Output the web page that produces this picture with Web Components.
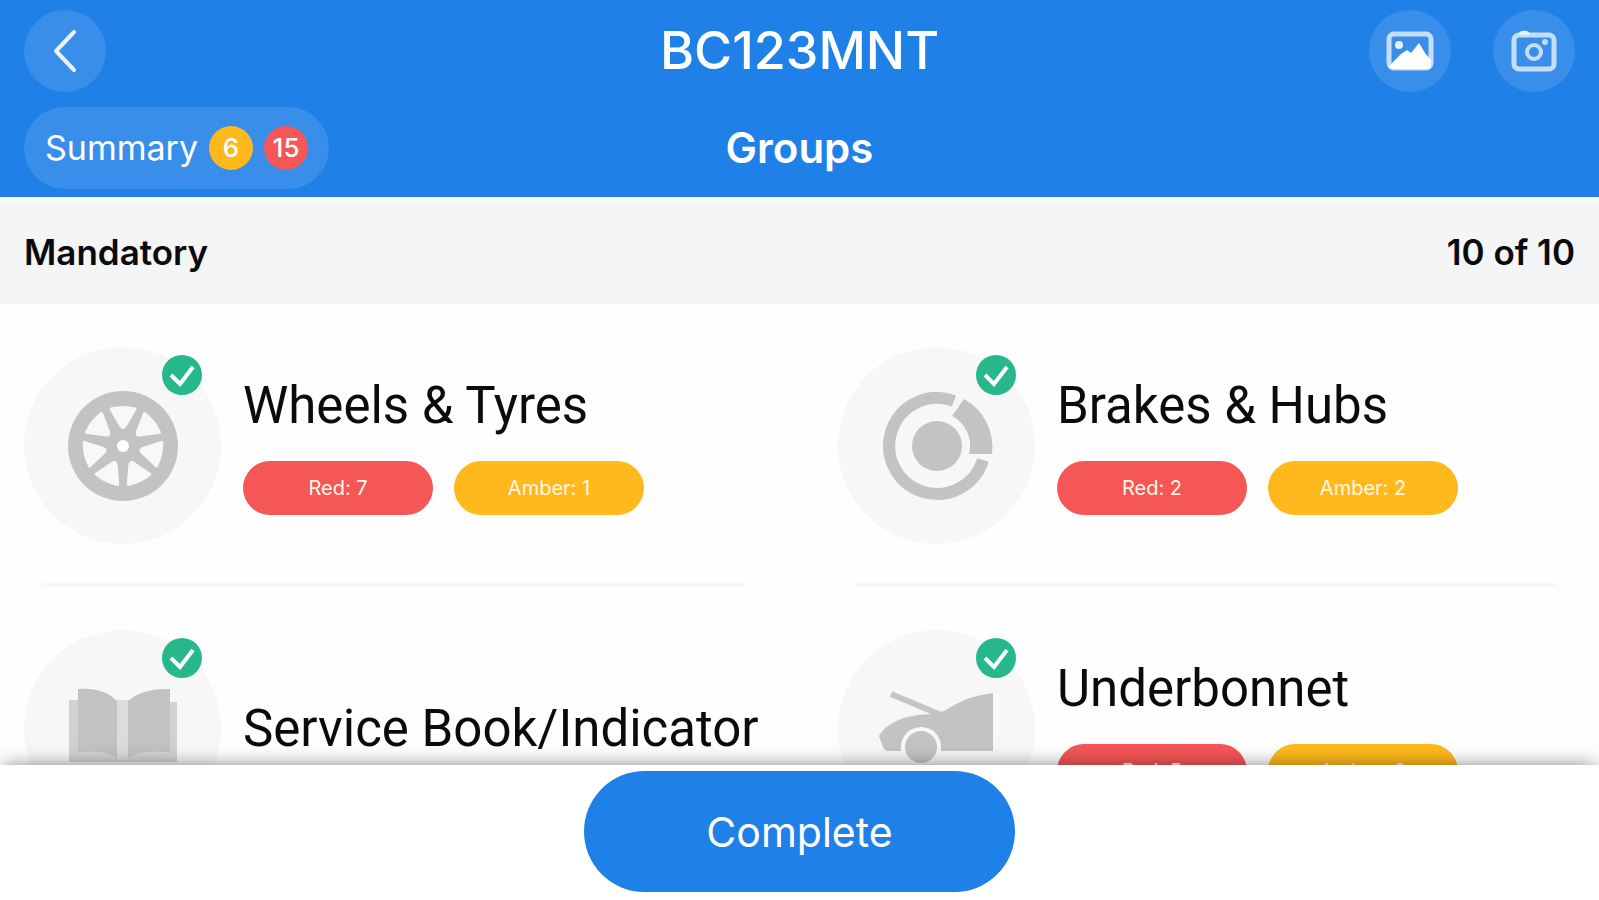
<!DOCTYPE html>
<html lang="en">
<head>
<meta charset="utf-8">
<meta name="viewport" content="width=device-width, initial-scale=1">
<title>BC123MNT - Groups</title>
<style>
  body { margin: 0; font-family: Inter, "Liberation Sans", sans-serif; color: #0b0b0b; background: #fefefe;
    --blue: #1f80e8; --red: #f55656; --amber: #ffb91d; --green: #26b88b; --gutter: 24px; }
</style>
</head>
<body>
<inspection-screen>
  <app-header slot="header" heading="BC123MNT" subheading="Groups" amber="6" red="15"></app-header>
  <section-bar slot="header" label="Mandatory">10 of 10</section-bar>
  <group-grid>
    <group-card icon="wheel" label="Wheels &amp; Tyres"><count-pill>Red: 7</count-pill><count-pill tone="amber">Amber: 1</count-pill></group-card>
    <group-card icon="brake" label="Brakes &amp; Hubs"><count-pill>Red: 2</count-pill><count-pill tone="amber">Amber: 2</count-pill></group-card>
    <group-card icon="book" label="Service Book/Indicator"></group-card>
    <group-card icon="car" label="Underbonnet"><count-pill>Red: 5</count-pill><count-pill tone="amber">Amber: 3</count-pill></group-card>
  </group-grid>
  <action-bar slot="footer">Complete</action-bar>
</inspection-screen>

<script>
const base = '*{box-sizing:border-box}h1,h2,p{margin:0}';
function define(name, render) {
  customElements.define(name, class extends HTMLElement {
    connectedCallback() {
      if (this.shadowRoot) return;
      const t = document.createElement('template');
      t.innerHTML = render(this);
      this.attachShadow({ mode: 'open' }).append(t.content.cloneNode(true));
    }
  });
}

const opening = '<path d="M-12-37Q0-40 12-37L2-20Q0-17-2-20Z"/>';
const icons = {
  wheel: `<circle r="55" fill="#c3c3c3"/><g fill="#f8f8f8" stroke="#f8f8f8" stroke-width="3" stroke-linejoin="round">${
    [0, 1, 2, 3, 4, 5, 6].map(i => `<g transform="rotate(${i * 360 / 7})">${opening}</g>`).join('')}</g><circle r="6" fill="#fff"/>`,
  brake: `<circle r="25" fill="#c3c3c3"/><path d="M46 14A48 48 0 1 1 17-45" fill="none" stroke="#c3c3c3" stroke-width="12"/>
    <path d="M27-47A55 55 0 0 1 55 8H32A33 33 0 0 0 15-30Z" fill="#c3c3c3"/>`,
  book: `<path d="M-54-29H-45V24Q-20 20-5 29H5Q20 20 45 24V-27H54V33H-54Z" fill="#d2d2d2"/>
    <path d="M-6-29H6V31H-6Z" fill="#dcdcdc"/>
    <path d="M-45-40Q-20-42-6-28V29Q-20 20-45 24ZM47-40Q20-41 5-28V29Q20 20 47 24Z" fill="#c2c2c2"/>`,
  car: `<path d="M-46-35L4-14" stroke="#c5c5c5" stroke-width="6"/>
    <path d="M56-36V22H4A20 20 0 0 0-36 22H-49Q-52 22-54 18L-58 7Q-52-5-30-12Q-18-15-5-15L7-18Q32-34 56-36Z" fill="#c3c3c3"/>
    <circle cx="-16" cy="18" r="20" fill="#f7f7f7"/><circle cx="-16" cy="18" r="16" fill="#c3c3c3"/>`
};

define('inspection-screen', () => `<style>${base}
  :host{display:flex;flex-direction:column;height:100vh;overflow:hidden}
  main{flex:1;min-height:0;overflow:hidden}
</style><slot name="header"></slot><main><slot></slot></main><slot name="footer"></slot>`);

define('round-button', el => `<style>${base}
  :host{display:block}
  button{display:grid;place-items:center;width:82px;height:82px;padding:0;border:0;border-radius:50%;background:#398ee9;color:#fff}
</style><button aria-label="${el.getAttribute('label')}"><slot></slot></button>`);

define('count-badge', el => `<style>${base}
  :host{display:grid;place-items:center;width:44px;height:44px;border-radius:50%;
    background:var(--${el.getAttribute('tone')});color:#fff;font-size:26px;line-height:44px;font-weight:500}
</style><slot></slot>`);

define('app-header', el => `<style>${base}
  :host{display:block;background:var(--blue);color:#fff}
  header{display:grid;grid-template-columns:1fr auto 1fr;grid-auto-rows:82px;row-gap:15px;align-items:center;padding:10px var(--gutter) 8px}
  h1{font-size:52px;line-height:60px;font-weight:500;text-align:center}
  h2{font-size:42px;line-height:52px;font-weight:600;text-align:center}
  .actions{display:flex;gap:42px;justify-content:flex-end}
  .summary{justify-self:start;display:flex;align-items:center;gap:11px;height:82px;padding:0 21px;border:0;border-radius:41px;
    background:#398ee9;color:#fff;font:400 34px/44px Inter,"Liberation Sans",sans-serif}
  svg{display:block}
</style>
<header>
  <round-button label="Back"><svg width="30" height="50" viewBox="0 0 30 50" fill="none" stroke="#e9f3ff" stroke-width="4" stroke-linecap="round" stroke-linejoin="round"><path d="M24 6L6 25L24 44"/></svg></round-button>
  <h1>${el.getAttribute('heading')}</h1>
  <div class="actions">
    <round-button label="Gallery"><svg width="48" height="40" viewBox="0 0 48 40"><rect x="3" y="3" width="42" height="34" rx="5" fill="none" stroke="#c4defa" stroke-width="5"/><path d="M3 35L15 23L21 19L25 22L33 12L39 22L45 29V34Q45 38 41 38H7Q3 38 3 35Z" fill="#fff"/><circle cx="13" cy="14" r="4" fill="#e6f2ff"/></svg></round-button>
    <round-button label="Camera"><svg width="46" height="42" viewBox="0 0 46 42" fill="none" stroke="#c4defa"><rect x="3" y="5" width="40" height="34" rx="5" stroke-width="5"/><path d="M8 4Q9 1 13 1Q17 1 19 4Z" fill="#e6f2ff" stroke="#e6f2ff"/><circle cx="23" cy="22" r="7" stroke-width="4"/><circle cx="34" cy="12" r="3" fill="#c4defa" stroke="none"/></svg></round-button>
  </div>
  <button class="summary">Summary <count-badge tone="amber">${el.getAttribute('amber')}</count-badge><count-badge tone="red">${el.getAttribute('red')}</count-badge></button>
  <h2>${el.getAttribute('subheading')}</h2>
</header>`);

define('section-bar', el => `<style>${base}
  :host{display:flex;justify-content:space-between;align-items:center;padding:30px var(--gutter);border-top:4px solid #fafbfc;background:#f3f5f7;
    font-size:35px;line-height:43px;font-weight:600}
  h2{font:inherit}
</style><h2>${el.getAttribute('label')}</h2><span><slot></slot></span>`);

define('group-grid', () => `<style>${base}
  :host{display:grid;grid-template-columns:1fr 1fr;column-gap:77px;padding:0 var(--gutter)}
</style><slot></slot>`);

define('group-card', el => `<style>${base}
  :host{display:block}
  article{display:flex;align-items:center;gap:22px;padding:43px 0 39px}
  .icon{position:relative;flex:none;display:grid;place-items:center;width:197px;height:197px;border-radius:50%;background:#f7f7f7}
  .tick{position:absolute;top:8px;right:18px}
  svg{display:block}
  h2{font:400 51px/60px Roboto,"Liberation Sans",sans-serif;white-space:nowrap}
  .counts{display:flex;gap:21px}
  .counts.filled{margin-top:25px}
  hr{height:4px;margin:0 17px;border:0;background:#f7f7f7}
</style>
<article>
  <div class="icon">
    <svg width="120" height="120" viewBox="-60 -60 120 120" aria-hidden="true">${icons[el.getAttribute('icon')]}</svg>
    <svg class="tick" width="41" height="41" viewBox="0 0 41 41" role="img" aria-label="Done"><circle cx="20" cy="20" r="20" fill="#26b88b"/><path d="M9 20L18 29L31 12" fill="none" stroke="#fff" stroke-width="4"/></svg>
  </div>
  <div><h2>${el.getAttribute('label').replace('&', '&amp;')}</h2><div class="counts ${el.children.length ? 'filled' : ''}"><slot></slot></div></div>
</article><hr>`);

define('count-pill', el => `<style>${base}
  :host{display:block;width:190px;border-radius:27px;background:var(--${el.getAttribute('tone') || 'red'});
    color:#fff6ec;font-size:20px;line-height:54px;text-align:center}
</style><slot></slot>`);

define('action-bar', () => `<style>${base}
  :host{display:flex;justify-content:center;position:relative;padding:6px var(--gutter) 8px;background:#fff;box-shadow:0 -3px 18px -4px rgba(0,0,0,.5)}
  button{width:431px;height:121px;padding:0;border:0;border-radius:61px;background:var(--blue);color:#fff;
    font:400 41px/52px Inter,"Liberation Sans",sans-serif}
</style><button><slot></slot></button>`);
</script>
</body>
</html>
